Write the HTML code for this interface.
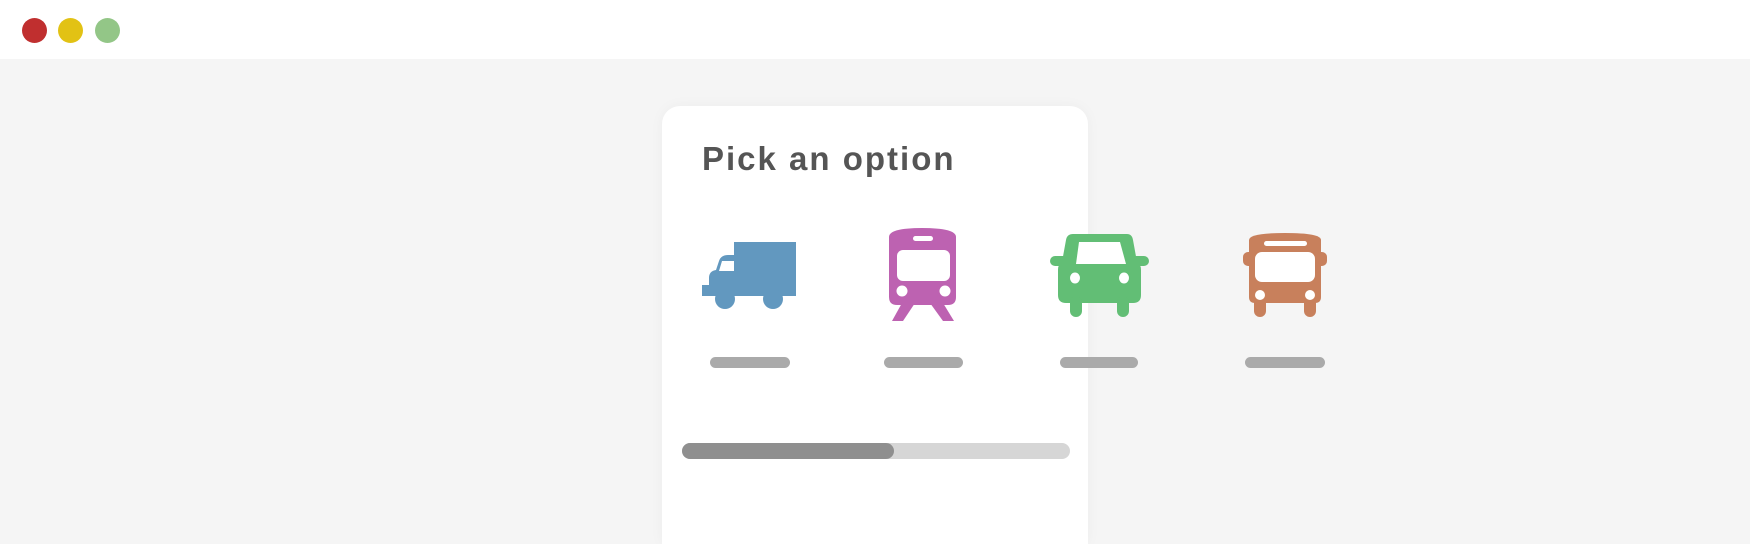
<!DOCTYPE html>
<html><head><meta charset="utf-8"><style>
html,body{margin:0;padding:0;width:1750px;height:544px;overflow:hidden;background:#f5f5f5;font-family:"Liberation Sans",sans-serif;position:relative}
.top{position:absolute;left:0;top:0;width:1750px;height:59px;background:#fff}
.dot{position:absolute;top:18px;width:25px;height:25px;border-radius:50%}
.card{position:absolute;left:662px;top:106px;width:426px;height:438px;background:#fff;border-radius:18px 18px 0 0;box-shadow:0 0 14px rgba(0,0,0,0.04)}
h1{position:absolute;left:702px;top:140px;margin:0;font-size:33px;font-weight:bold;color:#555;letter-spacing:2px}
.bar{position:absolute;top:357px;height:11px;border-radius:6px;background:#aaa}
.prog{position:absolute;left:682px;top:443px;width:388px;height:16px;border-radius:8px;background:#d6d6d6}
.fill{position:absolute;left:0;top:0;width:212px;height:16px;border-radius:8px;background:#8f8f8f}
svg{position:absolute;left:0;top:0}
</style></head><body>
<div class="top"></div>
<div class="dot" style="left:22px;background:#c02f2f"></div>
<div class="dot" style="left:58px;background:#e2c214"></div>
<div class="dot" style="left:95px;background:#93c687"></div>
<div class="card"></div>
<h1>Pick an option</h1>
<svg width="1750" height="544" viewBox="0 0 1750 544">
<g fill="#6298bf">
<rect x="734" y="242" width="62" height="54"/>
<path d="M706 296 V285 H709 V278 Q709 271 716 270 L719 261 Q721 255 728 255 H736 V296 Z"/>
<rect x="702" y="285" width="6" height="11"/>
<circle cx="725" cy="299" r="10"/>
<circle cx="773" cy="299" r="10"/>
</g>
<path d="M719 271 L722 261 H734 V271 Z" fill="#fff"/>
<g fill="#bd62b1">
<path d="M889 237 Q889 228 922 228 Q956 228 956 237 V297 Q956 305 948 305 H897 Q889 305 889 297 Z"/>
<path d="M902 303 H915 L903 321 H892 Z"/>
<path d="M930 303 H943 L954 321 H943 Z"/>
</g>
<rect x="913" y="236" width="20" height="5" rx="2.5" fill="#fff"/>
<rect x="897" y="250" width="53" height="31" rx="6" fill="#fff"/>
<circle cx="902" cy="291" r="5.5" fill="#fff"/>
<circle cx="945" cy="291" r="5.5" fill="#fff"/>
<g fill="#62be75">
<path d="M1073 234 H1127 Q1132 234 1133 240 L1137 262 Q1141 264 1141 270 V295 Q1141 303 1133 303 H1066 Q1058 303 1058 295 V270 Q1058 264 1062 262 L1066 240 Q1067 234 1073 234 Z"/>
<rect x="1050" y="256" width="99" height="10" rx="5"/>
<rect x="1070" y="296" width="12" height="21" rx="6"/>
<rect x="1117" y="296" width="12" height="21" rx="6"/>
</g>
<path d="M1079 242 H1120 L1126 264 H1076 Z" fill="#fff"/>
<ellipse cx="1075" cy="278" rx="5" ry="5.5" fill="#fff"/>
<ellipse cx="1124" cy="278" rx="5" ry="5.5" fill="#fff"/>
<g fill="#c8805c">
<path d="M1249 240 Q1249 233 1285 233 Q1321 233 1321 240 V297 Q1321 303 1315 303 H1255 Q1249 303 1249 297 Z"/>
<rect x="1243" y="252" width="84" height="14" rx="5"/>
<rect x="1254" y="296" width="12" height="21" rx="6"/>
<rect x="1304" y="296" width="12" height="21" rx="6"/>
</g>
<rect x="1264" y="241" width="43" height="5" rx="2.5" fill="#fff"/>
<rect x="1255" y="252" width="60" height="30" rx="7" fill="#fff"/>
<circle cx="1260" cy="295" r="5" fill="#fff"/>
<circle cx="1310" cy="295" r="5" fill="#fff"/>
</svg>
<div class="bar" style="left:710px;width:80px"></div>
<div class="bar" style="left:884px;width:79px"></div>
<div class="bar" style="left:1060px;width:78px"></div>
<div class="bar" style="left:1245px;width:80px"></div>
<div class="prog"><div class="fill"></div></div>
</body></html>
